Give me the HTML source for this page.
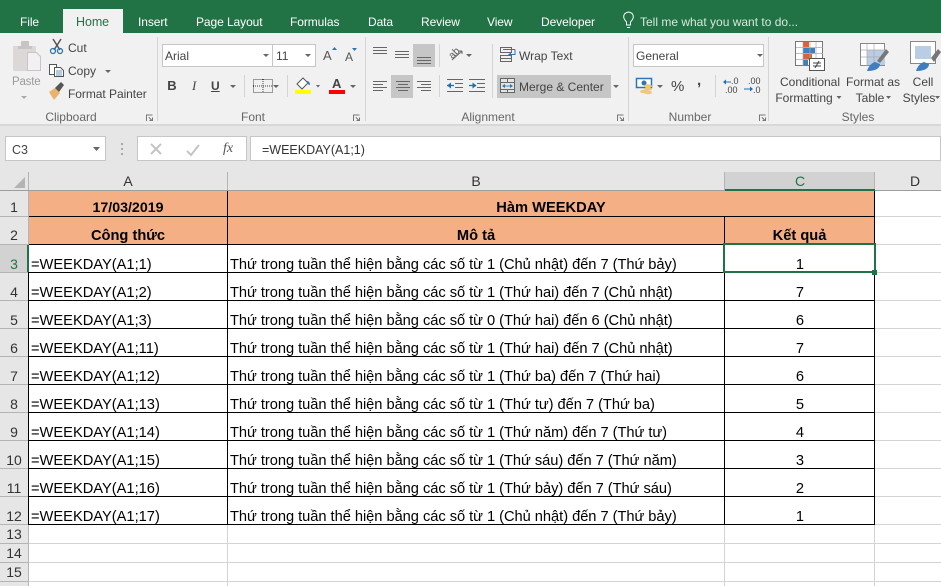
<!DOCTYPE html>
<html><head><meta charset="utf-8"><style>
html,body{margin:0;padding:0}
#p{position:relative;width:941px;height:586px;overflow:hidden;background:#fff;font-family:"Liberation Sans",sans-serif;color:#444}
#p div{position:absolute;white-space:nowrap}
.tab{top:14px;height:16px;line-height:16px;font-size:12px;color:#fff;letter-spacing:-.08px}
.r{font-size:12px;line-height:16px;height:16px;color:#444}
.g{font-size:12px;line-height:16px;height:16px;top:109px;color:#666;transform:translateX(-50%)}
.c{font-size:12px;line-height:16px;height:16px;color:#444;transform:translateX(-50%)}
.box{background:#fff;border:1px solid #c6c6c6;box-sizing:border-box}
.ch{font-size:14px;line-height:18px;top:172px;height:18px;color:#333;transform:translateX(-50%)}
.rh{font-size:14px;line-height:18px;height:18px;left:0;width:28px;text-align:center;color:#333}
.a,.b,.d{font-size:14.67px;line-height:18px;height:18px;color:#000}
.a{left:31px}.b{left:230px;letter-spacing:-.035px}
.d{left:725px;width:150px;text-align:center}
.h{font-size:14.67px;line-height:18px;height:18px;color:#000;font-weight:bold;text-align:center}
</style></head><body><div id="p">
<div style="left:0;top:0;width:941px;height:33px;background:#217346"></div>
<div style="left:63px;top:9px;width:60px;height:24px;background:#f1f1f1"></div>
<div style="left:0;top:33px;width:941px;height:91px;background:#f1f1f1"></div>
<div style="left:0;top:124px;width:941px;height:48px;background:#e6e6e6"></div>
<div style="left:0;top:124px;width:941px;height:2px;background:#d8d8d8"></div>

<div class="tab" style="left:20px">File</div>
<div class="tab" style="left:76px;color:#217346;font-size:12.5px">Home</div>
<div class="tab" style="left:138px">Insert</div>
<div class="tab" style="left:196px">Page Layout</div>
<div class="tab" style="left:290px">Formulas</div>
<div class="tab" style="left:368px">Data</div>
<div class="tab" style="left:421px">Review</div>
<div class="tab" style="left:487px">View</div>
<div class="tab" style="left:541px">Developer</div>
<div class="tab" style="left:640px;color:#d5e8dd;letter-spacing:0">Tell me what you want to do...</div>

<div class="box" style="left:162px;top:44px;width:111px;height:23px"></div>
<div class="box" style="left:272px;top:44px;width:44px;height:23px"></div>
<div class="box" style="left:633px;top:44px;width:131px;height:23px"></div>
<div style="left:497px;top:75px;width:114px;height:23px;background:#c6c6c6"></div>
<div style="left:413px;top:44px;width:22px;height:23px;background:#c6c6c6"></div>
<div style="left:391px;top:75px;width:22px;height:23px;background:#c6c6c6"></div>

<div class="r" style="left:68px;top:40px">Cut</div>
<div class="r" style="left:68px;top:63px">Copy</div>
<div class="r" style="left:68px;top:86px;letter-spacing:-.05px">Format Painter</div>
<div class="r" style="left:12px;top:74px;color:#9a9a9a;font-size:11.5px;letter-spacing:-.2px">Paste</div>
<div class="r" style="left:165px;top:48px">Arial</div>
<div class="r" style="left:276px;top:48px">11</div>
<div class="r" style="left:519px;top:48px">Wrap Text</div>
<div class="r" style="left:519px;top:79px">Merge &amp; Center</div>
<div class="r" style="left:636px;top:48px">General</div>
<div class="c" style="left:810px;top:74px">Conditional</div>
<div class="c" style="left:804px;top:90px">Formatting</div>
<div class="c" style="left:873px;top:74px">Format as</div>
<div class="c" style="left:870px;top:90px">Table</div>
<div class="c" style="left:923px;top:74px">Cell</div>
<div class="c" style="left:919px;top:90px">Styles</div>
<div class="g" style="left:71px">Clipboard</div>
<div class="g" style="left:253px">Font</div>
<div class="g" style="left:488px">Alignment</div>
<div class="g" style="left:690px">Number</div>
<div class="g" style="left:858px">Styles</div>
<div style="left:172px;top:78px;width:10px;text-align:center;font:bold 13px/16px 'Liberation Sans',sans-serif;color:#444;transform:translateX(-5px)">B</div>
<div style="left:194px;top:78px;font:italic 13px/16px 'Liberation Serif',serif;color:#444;transform:translateX(-2px)">I</div>
<div style="left:211px;top:78px;font:bold 12px/16px 'Liberation Sans',sans-serif;color:#444;text-decoration:underline">U</div>
<div style="left:323px;top:48px;font:13px/16px 'Liberation Sans',sans-serif;color:#555">A</div>
<div style="left:345px;top:50px;font:12px/14px 'Liberation Sans',sans-serif;color:#555">A</div>
<div style="left:332px;top:76px;font:bold 13px/16px 'Liberation Sans',sans-serif;color:#444">A</div>
<div style="left:671px;top:78px;font:15px/18px 'Liberation Sans',sans-serif;color:#444">%</div>
<div style="left:697px;top:72px;font:bold 15px/18px 'Liberation Sans',sans-serif;color:#444">,</div>
<div style="left:731px;top:76px;font:9px/10px 'Liberation Sans',sans-serif;color:#444">.0</div>
<div style="left:725px;top:85px;font:9px/10px 'Liberation Sans',sans-serif;color:#444">.00</div>
<div style="left:748px;top:76px;font:9px/10px 'Liberation Sans',sans-serif;color:#444">.00</div>
<div style="left:753px;top:85px;font:9px/10px 'Liberation Sans',sans-serif;color:#444">.0</div>
<div style="left:449px;top:48px;font:10px/11px 'Liberation Sans',sans-serif;color:#555;transform:rotate(-45deg)">ab</div>

<div class="box" style="left:5px;top:136px;width:101px;height:25px"></div>
<div class="box" style="left:137px;top:136px;width:110px;height:25px"></div>
<div class="box" style="left:250px;top:136px;width:691px;height:25px"></div>
<div class="r" style="left:12px;top:142px;font-size:12.5px">C3</div>
<div class="r" style="left:262px;top:142px;font-size:12.5px;color:#333">=WEEKDAY(A1;1)</div>
<div style="left:223px;top:141px;font:italic 14px/16px 'Liberation Serif',serif;color:#555">fx</div>

<!-- grid -->
<div style="left:0;top:172px;width:941px;height:414px;background:#fff"></div>
<div style="left:0;top:172px;width:941px;height:18px;background:#e6e6e6"></div>
<div style="left:0;top:172px;width:28px;height:414px;background:#e6e6e6"></div>
<div style="left:725px;top:172px;width:150px;height:18px;background:#d2d2d2"></div>
<div style="left:0;top:245px;width:28px;height:27px;background:#d2d2d2"></div>
<div style="left:29px;top:191px;width:846px;height:53px;background:#f4b084"></div>

<svg width="941" height="586" viewBox="0 0 941 586" style="position:absolute;left:0;top:0" shape-rendering="crispEdges">
<g fill="#d4d4d4">
<rect x="875" y="216" width="66" height="1"/><rect x="875" y="244" width="66" height="1"/>
<rect x="875" y="272" width="66" height="1"/><rect x="875" y="300" width="66" height="1"/><rect x="875" y="328" width="66" height="1"/><rect x="875" y="356" width="66" height="1"/><rect x="875" y="384" width="66" height="1"/><rect x="875" y="412" width="66" height="1"/><rect x="875" y="440" width="66" height="1"/><rect x="875" y="468" width="66" height="1"/><rect x="875" y="496" width="66" height="1"/><rect x="875" y="524" width="66" height="1"/>
<rect x="29" y="543" width="912" height="1"/><rect x="29" y="562" width="912" height="1"/><rect x="29" y="581" width="912" height="1"/>
<rect x="227" y="525" width="1" height="61"/><rect x="724" y="525" width="1" height="61"/><rect x="874" y="525" width="1" height="61"/>
</g>
<g fill="#b4b4b4">
<rect x="0" y="216" width="28" height="1"/><rect x="0" y="244" width="28" height="1"/><rect x="0" y="272" width="28" height="1"/><rect x="0" y="300" width="28" height="1"/><rect x="0" y="328" width="28" height="1"/><rect x="0" y="356" width="28" height="1"/><rect x="0" y="384" width="28" height="1"/><rect x="0" y="412" width="28" height="1"/><rect x="0" y="440" width="28" height="1"/><rect x="0" y="468" width="28" height="1"/><rect x="0" y="496" width="28" height="1"/><rect x="0" y="524" width="28" height="1"/><rect x="0" y="543" width="28" height="1"/><rect x="0" y="562" width="28" height="1"/><rect x="0" y="581" width="28" height="1"/>
<rect x="227" y="172" width="1" height="18"/><rect x="724" y="172" width="1" height="18"/><rect x="874" y="172" width="1" height="18"/>
<rect x="28" y="172" width="1" height="414"/>
<rect x="0" y="190" width="941" height="1" fill="#9e9e9e"/>
</g>
<g fill="#000">
<rect x="29" y="216" width="846" height="1"/><rect x="29" y="244" width="846" height="1"/><rect x="29" y="272" width="846" height="1"/><rect x="29" y="300" width="846" height="1"/><rect x="29" y="328" width="846" height="1"/><rect x="29" y="356" width="846" height="1"/><rect x="29" y="384" width="846" height="1"/><rect x="29" y="412" width="846" height="1"/><rect x="29" y="440" width="846" height="1"/><rect x="29" y="468" width="846" height="1"/><rect x="29" y="496" width="846" height="1"/><rect x="29" y="524" width="846" height="1"/>
<rect x="28" y="272" width="1" height="253"/>
<rect x="227" y="191" width="1" height="334"/>
<rect x="724" y="217" width="1" height="308"/>
<rect x="874" y="191" width="1" height="334"/>
</g>
<rect x="725" y="189" width="150" height="2" fill="#217346"/>
<rect x="27" y="245" width="2" height="27" fill="#217346"/>
<rect x="724" y="244" width="151" height="28" fill="none" stroke="#217346" stroke-width="2"/>
<rect x="872" y="270" width="5" height="5" fill="#217346"/>
<polygon points="14,188 25,188 25,177" fill="#b4b4b4" shape-rendering="auto"/>

<!-- separators -->
<g fill="#d4d4d4">
<rect x="157" y="37" width="1" height="84"/><rect x="365" y="37" width="1" height="84"/><rect x="628" y="37" width="1" height="84"/><rect x="768" y="37" width="1" height="84"/>
<rect x="244" y="75" width="1" height="22"/><rect x="287" y="75" width="1" height="22"/>
<rect x="439" y="44" width="1" height="23"/><rect x="439" y="75" width="1" height="22"/><rect x="492" y="44" width="1" height="54"/><rect x="715" y="75" width="1" height="22"/>
</g>
<!-- bars -->
<rect x="295" y="90" width="16" height="4" fill="#ffff00"/>
<rect x="329" y="90" width="16" height="4" fill="#ff0000"/>

<g shape-rendering="auto">
<!-- paste -->
<rect x="13" y="46" width="23" height="25" rx="1" fill="#dcd8d8"/><rect x="21" y="41" width="8" height="7" rx="1" fill="#c8c4c4"/><rect x="18" y="46" width="14" height="3" fill="#c8c4c4"/>
<path d="M27.500 52.500h9l4 4v14h-13z" fill="#f3f0f3" stroke="#c8c4c8"/>
<path d="M21 96h6l-3 3z" fill="#aaa"/>
<!-- scissors -->
<path d="M53 39l7 11M61 39l-7 11" stroke="#555" stroke-width="1.500" fill="none"/><circle cx="53" cy="51" r="2.500" fill="none" stroke="#2e75b6" stroke-width="1.300"/><circle cx="60" cy="51" r="2.500" fill="none" stroke="#2e75b6" stroke-width="1.300"/>
<!-- copy -->
<path d="M49.500 64.500h7v10h-7z" fill="#fff" stroke="#555"/><path d="M54.500 67.500h6l3 3v6h-9z" fill="#fff" stroke="#555"/><path d="M56 71h6M56 73h6M56 75h6" stroke="#2e75b6" stroke-width=".8"/>
<path d="M105 70h6l-3 3z" fill="#666"/>
<!-- brush -->
<path d="M49 92l6-4 5 5-6 7z" fill="#e9b36e"/><path d="M55 88l6-6 3 3-5 7z" fill="#555"/>
<!-- dropdowns -->
<path d="M263 54h6l-3 3zM305 54h6l-3 3zM230 85h6l-3 3zM273 85h6l-3 3zM350 85h6l-3 3zM316 85h4l-2 2.500zM466 54h6l-3 3zM613 85h6l-3 3zM757 54h6l-3 3zM657 85h6l-3 3zM836.500 96h5l-2.500 3zM886 96h5l-2.500 3zM935 96h5l-2.500 3zM93 147h7l-3.500 4z" fill="#666"/>
<!-- font size arrows -->
<path d="M332 50l2.500-3 2.500 3z" fill="#2e75b6"/><path d="M352 48h5l-2.500 3z" fill="#2e75b6"/>
<!-- border icon -->
<path d="M253.500 79.500h19v13h-19zM263 79v14M253 86h20" fill="none" stroke="#444" stroke-dasharray="1 1"/>
<!-- fill -->
<path d="M297 84l6-6 5 5-6 6z" fill="#fff" stroke="#555"/><path d="M307 81c2 0 3 2 3 4-2 0-3-2-3-4z" fill="#2e75b6"/>
<!-- align lines -->
<g stroke="#666" stroke-width="1" fill="none" shape-rendering="crispEdges">
<path d="M373 47.500h14M373 50.500h14M373 53.500h14"/>
<path d="M395 51.500h14M395 54.500h14M395 57.500h14"/>
<path d="M417 57.500h14M417 60.500h14M417 63.500h14"/>
<path d="M373 81.500h14M373 84.500h10M373 87.500h14M373 90.500h10"/>
<path d="M396 81.500h14M398 84.500h10M396 87.500h14M398 90.500h10"/>
<path d="M417 81.500h14M421 84.500h10M417 87.500h14M421 90.500h10"/>
<path d="M447 79.500h16M455 83.500h8M455 87.500h8M447 91.500h16"/>
<path d="M469 79.500h16M477 83.500h8M477 87.500h8M469 91.500h16"/>
<!-- wrap -->
<path d="M500.500 47.500h11v5h-11zM500.500 55.500h11v6h-11zM500 58.500h11"/>
<!-- merge -->
<rect x="500.500" y="78.500" width="14" height="14" fill="#e4e4e4"/><path d="M500 82.500h15M500 89.500h15M507.500 78v4M507.500 89v4"/>
</g>
<path d="M503 49.500h12M515 49.500v5h-5" stroke="#2e75b6" fill="none"/><path d="M508 54.500l3-2v4z" fill="#2e75b6"/>
<path d="M503 86h9" stroke="#2e75b6" stroke-width=".8"/><path d="M502 86l3-2v4zM513 86l-3-2v4z" fill="#2e75b6"/>
<path d="M447 85.500h7" stroke="#1f6fb5" stroke-width="1.300"/><path d="M447 85.500l4-3v6z" fill="#1f6fb5"/><path d="M469 85.500h7" stroke="#1f6fb5" stroke-width="1.300"/><path d="M476.500 85.500l-4-3v6z" fill="#1f6fb5"/>
<!-- orientation -->
<path d="M452 60l10-9M462 51h-3M462 51v3" stroke="#666" fill="none"/>
<!-- launchers -->
<g fill="none" stroke="#777" stroke-width="1" shape-rendering="crispEdges">
<path d="M146.500 121v-6h6M149 117.500l3.500 3.500M149.500 120.500h3v-3"/>
<path d="M353.500 121v-6h6M356 117.500l3.500 3.500M356.500 120.500h3v-3"/>
<path d="M617.500 121v-6h6M620 117.500l3.500 3.500M620.500 120.500h3v-3"/>
<path d="M759.500 121v-6h6M762 117.500l3.500 3.500M762.500 120.500h3v-3"/>
</g>
<!-- currency -->
<rect x="636.500" y="78.500" width="15" height="9" fill="#fff" stroke="#2e75b6" stroke-width="1.500"/><circle cx="644" cy="83" r="2.500" fill="#2e75b6"/>
<ellipse cx="648" cy="86" rx="4" ry="1.800" fill="#edc97a"/><ellipse cx="648" cy="89" rx="4" ry="1.800" fill="#edc97a"/><ellipse cx="644" cy="91.500" rx="4" ry="1.800" fill="#edc97a"/><ellipse cx="648" cy="92.500" rx="4" ry="1.800" fill="#edc97a"/>
<path d="M724 82h7" stroke="#1f6fb5"/><path d="M723 82l3-2.500v5z" fill="#1f6fb5"/><path d="M744 89h8" stroke="#1f6fb5"/><path d="M753 89l-3-2.500v5z" fill="#1f6fb5"/>
<!-- conditional -->
<rect x="795.500" y="41.500" width="27" height="24" fill="#fff" stroke="#777"/>
<rect x="803" y="42" width="6" height="5.500" fill="#d9623b"/><rect x="803" y="48" width="12" height="5.500" fill="#3f7fbf"/><rect x="803" y="54" width="9" height="5.500" fill="#d9623b"/><rect x="803" y="60" width="5" height="5.500" fill="#3f7fbf"/>
<path d="M803 42v24M810 42v24M816 42v24M796 47.500h27M796 53.500h27M796 59.500h27" stroke="#aaa" stroke-width=".7"/>
<rect x="809.500" y="58.500" width="15" height="12" fill="#fff" stroke="#555"/><path d="M813 63h8M813 66h8M819 61l-4 7" stroke="#444" fill="none"/>
<!-- format table -->
<rect x="860.500" y="43.500" width="24" height="22" fill="#fff" stroke="#888"/><rect x="867" y="50" width="18" height="15" fill="#b9cde5"/>
<path d="M867 44v22M874 44v22M861 50h24M861 57h24" stroke="#aaa" stroke-width=".7"/>
<path d="M877 61l9-12 3 3-9 11z" fill="#777"/><path d="M867 71c2-6 5-8 8-9l5 2c0 4-4 7-13 7z" fill="#3f7fbf"/>
<!-- cell styles -->
<rect x="910.500" y="41.500" width="25" height="22" fill="#fff" stroke="#888"/><rect x="915" y="46" width="16" height="13" fill="#b9cde5"/>
<path d="M931 58l7-9 3 3-7 10z" fill="#777"/><path d="M916 71c2-6 5-8 8-9l5 2c0 4-4 7-13 7z" fill="#3f7fbf"/>
<!-- bulb -->
<path d="M626.500 25v-3c-4-4-4-9 2-10 6 1 6 6 2 10v3z M627 27.500h3" fill="none" stroke="#fff" stroke-width="1"/>
<!-- formula bar -->
<path d="M122 143v2M122 148v2M122 153v2" stroke="#a8a8a8" stroke-width="2"/>
<path d="M151 144l10 10M161 144l-10 10" stroke="#c4c4c4" stroke-width="2" fill="none"/>
<path d="M187 151l4 4 8-10" stroke="#c4c4c4" stroke-width="2" fill="none"/>
</g>
</svg>

<div class="ch" style="left:128px">A</div>
<div class="ch" style="left:476px">B</div>
<div class="ch" style="left:800px;color:#217346">C</div>
<div class="ch" style="left:915px">D</div>
<div class="rh" style="top:198px">1</div>
<div class="rh" style="top:226px">2</div>
<div class="rh" style="top:255px;color:#217346">3</div>
<div class="rh" style="top:283px">4</div>
<div class="rh" style="top:311px">5</div>
<div class="rh" style="top:339px">6</div>
<div class="rh" style="top:367px">7</div>
<div class="rh" style="top:395px">8</div>
<div class="rh" style="top:423px">9</div>
<div class="rh" style="top:451px">10</div>
<div class="rh" style="top:479px">11</div>
<div class="rh" style="top:507px">12</div>
<div class="rh" style="top:525px">13</div>
<div class="rh" style="top:544px">14</div>
<div class="rh" style="top:563px">15</div>

<div class="h" style="left:29px;width:198px;top:199px;font-size:14.2px">17/03/2019</div>
<div class="h" style="left:228px;width:646px;top:199px">Hàm WEEKDAY</div>
<div class="h" style="left:29px;width:198px;top:227px">Công thức</div>
<div class="h" style="left:228px;width:496px;top:227px">Mô tả</div>
<div class="h" style="left:725px;width:149px;top:227px">Kết quả</div>

<div class="a" style="top:256px">=WEEKDAY(A1;1)</div><div class="b" style="top:256px">Thứ trong tuần thể hiện bằng các số từ 1 (Chủ nhật) đến 7 (Thứ bảy)</div><div class="d" style="top:256px">1</div>
<div class="a" style="top:284px">=WEEKDAY(A1;2)</div><div class="b" style="top:284px">Thứ trong tuần thể hiện bằng các số từ 1 (Thứ hai) đến 7 (Chủ nhật)</div><div class="d" style="top:284px">7</div>
<div class="a" style="top:312px">=WEEKDAY(A1;3)</div><div class="b" style="top:312px">Thứ trong tuần thể hiện bằng các số từ 0 (Thứ hai) đến 6 (Chủ nhật)</div><div class="d" style="top:312px">6</div>
<div class="a" style="top:340px">=WEEKDAY(A1;11)</div><div class="b" style="top:340px">Thứ trong tuần thể hiện bằng các số từ 1 (Thứ hai) đến 7 (Chủ nhật)</div><div class="d" style="top:340px">7</div>
<div class="a" style="top:368px">=WEEKDAY(A1;12)</div><div class="b" style="top:368px">Thứ trong tuần thể hiện bằng các số từ 1 (Thứ ba) đến 7 (Thứ hai)</div><div class="d" style="top:368px">6</div>
<div class="a" style="top:396px">=WEEKDAY(A1;13)</div><div class="b" style="top:396px">Thứ trong tuần thể hiện bằng các số từ 1 (Thứ tư) đến 7 (Thứ ba)</div><div class="d" style="top:396px">5</div>
<div class="a" style="top:424px">=WEEKDAY(A1;14)</div><div class="b" style="top:424px">Thứ trong tuần thể hiện bằng các số từ 1 (Thứ năm) đến 7 (Thứ tư)</div><div class="d" style="top:424px">4</div>
<div class="a" style="top:452px">=WEEKDAY(A1;15)</div><div class="b" style="top:452px">Thứ trong tuần thể hiện bằng các số từ 1 (Thứ sáu) đến 7 (Thứ năm)</div><div class="d" style="top:452px">3</div>
<div class="a" style="top:480px">=WEEKDAY(A1;16)</div><div class="b" style="top:480px">Thứ trong tuần thể hiện bằng các số từ 1 (Thứ bảy) đến 7 (Thứ sáu)</div><div class="d" style="top:480px">2</div>
<div class="a" style="top:508px">=WEEKDAY(A1;17)</div><div class="b" style="top:508px">Thứ trong tuần thể hiện bằng các số từ 1 (Chủ nhật) đến 7 (Thứ bảy)</div><div class="d" style="top:508px">1</div>
</div></body></html>
